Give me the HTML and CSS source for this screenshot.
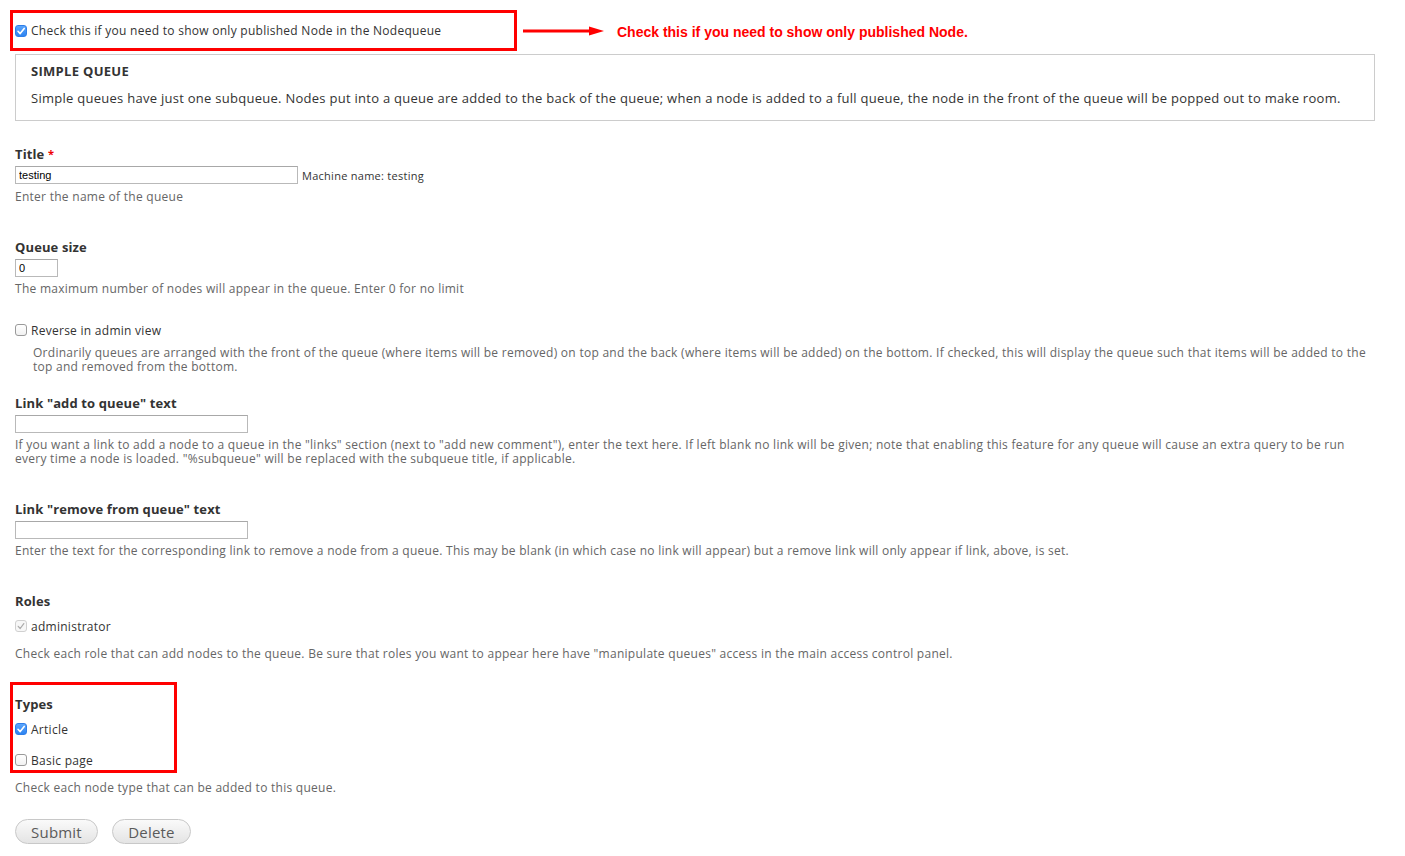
FILE: index.html
```html
<!DOCTYPE html>
<html lang="en">
<head>
    <meta charset="UTF-8">
    <meta name="viewport" content="width=device-width, initial-scale=1.0">
    <title>Nodequeue settings</title>
    <link rel="stylesheet" href="styles.css">
</head>
<body>
    <div class="page">
        <!-- published only option with annotation -->
        <div class="note-row">
            <div class="mark mark-top">
                <label class="check-line">
                    <span class="cb checked"><svg viewBox="0 0 12 12" width="12" height="12"><path d="M3 6.3 L5.2 8.6 L9.2 3.4" fill="none" stroke="#fff" stroke-width="1.6" stroke-linecap="round" stroke-linejoin="round"/></svg></span>
                    Check this if you need to show only published Node in the Nodequeue
                </label>
            </div>
            <svg class="arrow" width="82" height="10" viewBox="0 0 82 10"><rect x="0" y="3.5" width="68" height="3" fill="#f00"/><polygon points="66,0.5 81,5 66,9.5" fill="#f00"/></svg>
            <span class="note-text">Check this if you need to show only published Node.</span>
        </div>

        <div class="queue-box">
            <h3>SIMPLE QUEUE</h3>
            <p>Simple queues have just one subqueue. Nodes put into a queue are added to the back of the queue; when a node is added to a full queue, the node in the front of the queue will be popped out to make room.</p>
        </div>

        <div class="item item-title">
            <div class="label">Title <span class="req">*</span></div>
            <div class="input-line">
                <input type="text" class="txt txt-title" value="testing">
                <span class="machine">Machine name: testing</span>
            </div>
            <div class="desc desc-title">Enter the name of the queue</div>
        </div>

        <div class="item">
            <div class="label">Queue size</div>
            <input type="text" class="txt txt-size" value="0">
            <div class="desc">The maximum number of nodes will appear in the queue. Enter 0 for no limit</div>
        </div>

        <div class="item item-reverse">
            <label class="check-line"><span class="cb"></span> Reverse in admin view</label>
            <div class="desc desc-indent">Ordinarily queues are arranged with the front of the queue (where items will be removed) on top and the back (where items will be added) on the bottom. If checked, this will display the queue such that items will be added to the top and removed from the bottom.</div>
        </div>

        <div class="item item-link">
            <div class="label">Link "add to queue" text</div>
            <input type="text" class="txt txt-link">
            <div class="desc">If you want a link to add a node to a queue in the "links" section (next to "add new comment"), enter the text here. If left blank no link will be given; note that enabling this feature for any queue will cause an extra query to be run every time a node is loaded. "%subqueue" will be replaced with the subqueue title, if applicable.</div>
        </div>

        <div class="item">
            <div class="label">Link "remove from queue" text</div>
            <input type="text" class="txt txt-link">
            <div class="desc">Enter the text for the corresponding link to remove a node from a queue. This may be blank (in which case no link will appear) but a remove link will only appear if link, above, is set.</div>
        </div>

        <div class="item">
            <div class="label">Roles</div>
            <label class="check-line role"><span class="cb disabled"><svg viewBox="0 0 12 12" width="12" height="12"><path d="M3.2 6.3 L5.2 8.5 L8.8 3.6" fill="none" stroke="#aaa" stroke-width="1.2" stroke-linecap="round" stroke-linejoin="round"/></svg></span> administrator</label>
            <div class="desc desc-roles">Check each role that can add nodes to the queue. Be sure that roles you want to appear here have "manipulate queues" access in the main access control panel.</div>
        </div>

        <div class="item item-types">
            <div class="mark mark-types">
                <div class="label">Types</div>
                <label class="check-line type"><span class="cb checked"><svg viewBox="0 0 12 12" width="12" height="12"><path d="M3 6.3 L5.2 8.6 L9.2 3.4" fill="none" stroke="#fff" stroke-width="1.6" stroke-linecap="round" stroke-linejoin="round"/></svg></span> Article</label>
                <label class="check-line type"><span class="cb"></span> Basic page</label>
            </div>
            <div class="desc desc-types">Check each node type that can be added to this queue.</div>
        </div>

        <div class="actions">
            <button class="btn btn-submit">Submit</button>
            <button class="btn btn-delete">Delete</button>
        </div>
    </div>
</body>
</html>
```

FILE: styles.css
```css
body {
    margin: 0;
    background-color: #fff;
    color: #333;
    font-family: "Open Sans", "DejaVu Sans", sans-serif;
    font-size: 13px;
    letter-spacing: 0.27px;
}

.page {
    padding: 10px 30px 0 15px;
}

/* annotation boxes drawn on the screenshot */
.mark {
    border: 3px solid #f00;
    box-sizing: border-box;
}

.note-row {
    display: flex;
    align-items: center;
    height: 41px;
}

.mark-top {
    width: 507px;
    height: 41px;
    margin-left: -5px;
    padding: 0 0 0 2px;
    display: flex;
    align-items: center;
}

.arrow {
    margin-left: 6px;
    margin-top: 1px;
}

.note-text {
    margin-left: 12px;
    margin-top: 2px;
    font-family: "Liberation Sans", Arial, sans-serif;
    font-weight: bold;
    font-size: 14px;
    letter-spacing: 0;
    color: #f00;
}

.check-line {
    display: flex;
    align-items: center;
    gap: 4px;
    height: 16px;
    font-size: 12px;
    color: #333;
}

.cb {
    width: 12px;
    height: 12px;
    box-sizing: border-box;
    border: 1px solid #9a9a9a;
    border-radius: 3px;
    background: linear-gradient(#fff, #f1f1f1);
    display: inline-flex;
    flex: none;
}

.cb svg {
    display: block;
    margin: -1px;
}

.cb.checked {
    border-color: #2f7ee8;
    background: linear-gradient(#5ba5fb, #2e84f1);
}

.cb.disabled {
    border-color: #d0d0d0;
    background: #f7f7f7;
}

.queue-box {
    margin-top: 3px;
    border: 1px solid #ccc;
    padding: 8px 15px 11px;
    height: 67px;
    box-sizing: border-box;
}

.queue-box h3 {
    margin: 0;
    font-size: 13px;
    line-height: 16px;
    font-weight: bold;
    letter-spacing: 0.3px;
}

.queue-box p {
    margin: 11px 0 0;
    font-size: 13px;
    line-height: 16px;
}

.item {
    margin-top: 35px;
}

.item-title {
    margin-top: 25px;
}

.item-reverse {
    margin-top: 26px;
}

.item-link {
    margin-top: 21px;
}

.label {
    font-weight: bold;
    font-size: 13px;
    line-height: 16px;
    letter-spacing: 0.12px;
    margin-bottom: 4px;
}

.req {
    color: #e00;
    font-size: 11px;
    vertical-align: top;
}

.input-line {
    display: flex;
    align-items: center;
    gap: 4px;
}

.txt {
    display: block;
    box-sizing: border-box;
    height: 18px;
    margin: 0;
    padding: 0 3px;
    border: 1px solid #b9b9b9;
    border-top-color: #a8a8a8;
    font-family: "Liberation Sans", Arial, sans-serif;
    font-size: 11px;
    letter-spacing: 0;
    color: #000;
}

.txt-title {
    width: 283px;
}

.txt-size {
    width: 43px;
}

.txt-link {
    width: 233px;
}

.machine {
    font-size: 11px;
    color: #333;
}

.desc {
    margin-top: 5px;
    font-size: 12px;
    line-height: 14px;
    color: #666;
}

.desc-title {
    margin-top: 6px;
}

.desc-indent {
    margin-top: 8px;
    padding-left: 18px;
}

.role {
    margin-top: 9px;
}

.desc-roles {
    margin-top: 13px;
}

.item-types {
    margin-top: 21px;
}

.mark-types {
    width: 167px;
    height: 91px;
    margin-left: -5px;
    padding: 11px 0 0 2px;
}

.mark-types .label {
    margin-bottom: 9px;
}

.type {
    margin-bottom: 15px;
}

.desc-types {
    margin-top: 8px;
}

.actions {
    display: flex;
    gap: 14px;
    margin-top: 24px;
}

.btn {
    height: 25px;
    padding: 0;
    border: 1px solid #c8c8c8;
    border-radius: 13px;
    background: linear-gradient(#fafafa, #e4e4e4);
    color: #5a5a5a;
    font-family: "Open Sans", "DejaVu Sans", sans-serif;
    font-size: 15px;
    letter-spacing: 0.2px;
}

.btn-submit {
    width: 83px;
}

.btn-delete {
    width: 79px;
}
```
